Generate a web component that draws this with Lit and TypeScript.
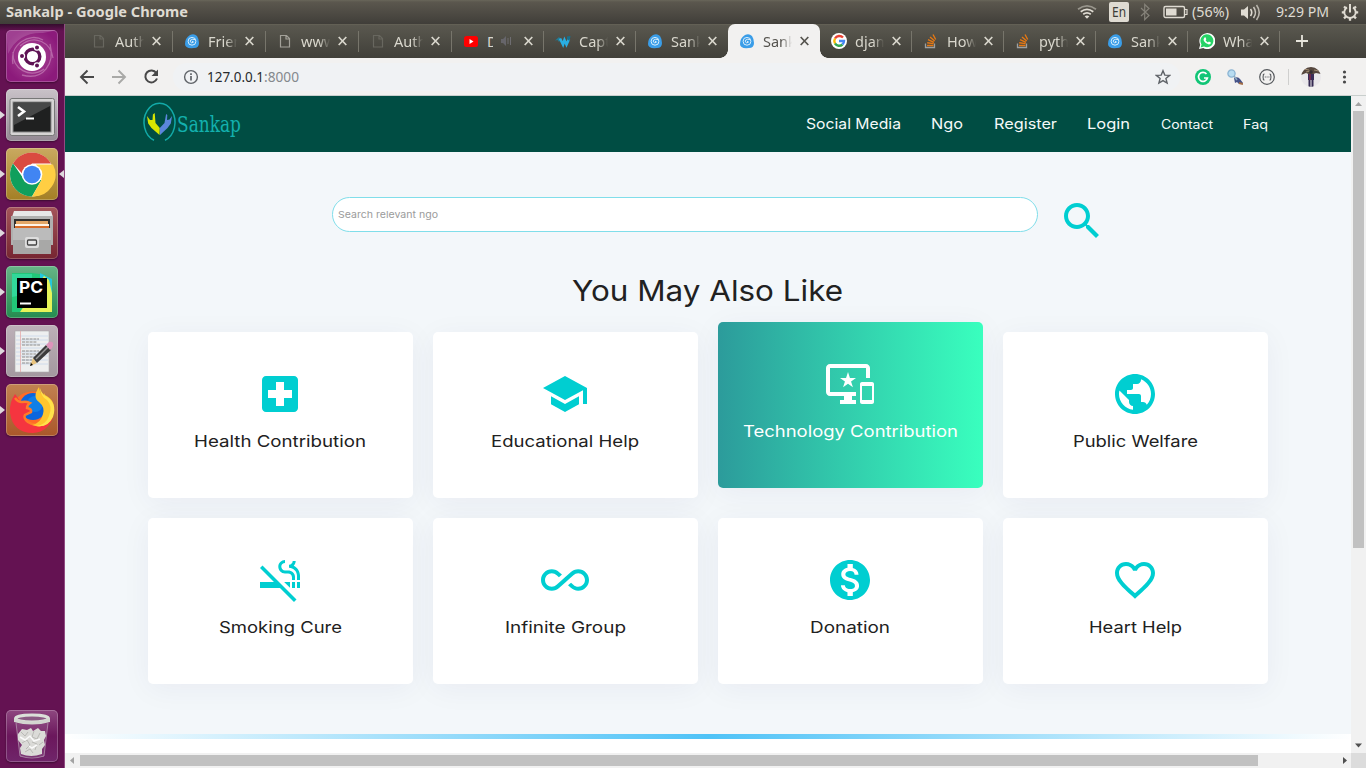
import { LitElement, html, svg, css, nothing } from "lit";
import { customElement, property } from "lit/decorators.js";
import { classMap } from "lit/directives/class-map.js";

/** One line of real text drawn to an exact advance width. */
const line = (text: string, width: number, height: number, base: number, cls: string) => html`
  <svg class="line ${cls}" width=${width} height=${height}>
    <text x="0" y=${base} textLength=${width} lengthAdjust="spacingAndGlyphs">${text}</text>
  </svg>`;

const material: Record<string, string> = {
  search: "M15.5 14h-.79l-.28-.27C15.41 12.59 16 11.11 16 9.5 16 5.91 13.09 3 9.5 3S3 5.91 3 9.5 5.91 16 9.5 16c1.61 0 3.09-.59 4.23-1.57l.27.28v.79l5 4.99L20.49 19l-4.99-5zm-6 0C7.01 14 5 11.99 5 9.5S7.01 5 9.5 5 14 7.01 14 9.5 11.99 14 9.5 14z",
  hospital: "M19 3H5c-1.1 0-1.99.9-1.99 2L3 19c0 1.1.9 2 2 2h14c1.1 0 2-.9 2-2V5c0-1.1-.9-2-2-2zm-1 11h-4v4h-4v-4H6v-4h4V6h4v4h4v4z",
  school: "M5 13.18v4L12 21l7-3.82v-4L12 17l-7-3.82zM12 3L1 9l11 6 9-4.91V17h2V9L12 3z",
  devices: "M23 11.01L18 11c-.55 0-1 .45-1 1v9c0 .55.45 1 1 1h5c.55 0 1-.45 1-1v-9c0-.55-.45-.99-1-.99zM23 20h-5v-7h5v7zM20 2H2C.89 2 0 2.89 0 4v12c0 1.1.89 2 2 2h7v2H7v2h8v-2h-2v-2h2v-2H2V4h18v5h2V4c0-1.11-.9-2-2-2zm-8.03 7L11 6l-.97 3H7l2.47 1.76-.94 2.91 2.47-1.8 2.47 1.8-.94-2.91L15 9h-3.03z",
  globe: "M12 2C6.48 2 2 6.48 2 12s4.48 10 10 10 10-4.48 10-10S17.52 2 12 2zm-1 17.93c-3.95-.49-7-3.85-7-7.93 0-.62.08-1.21.21-1.79L9 15v1c0 1.1.9 2 2 2v1.93zm6.9-2.54c-.26-.81-1-1.39-1.9-1.39h-1v-3c0-.55-.45-1-1-1H8v-2h2c.55 0 1-.45 1-1V7h2c1.1 0 2-.9 2-2v-.41c2.93 1.19 5 4.06 5 7.41 0 2.08-.8 3.97-2.1 5.39z",
  smoke: "M2 6l6.99 7H2v3h9.99l7 7 1.26-1.25-17-17zm18.5 7H22v3h-1.5zM18 13h1.5v3H18zm.85-8.12c.62-.61 1-1.45 1-2.38h-1.5c0 1.02-.83 1.85-1.85 1.85v1.5c2.24 0 4 1.83 4 4.07V12H22V9.92c0-2.23-1.28-4.15-3.15-5.04zM14.5 8.7h1.53c1.05 0 1.97.74 1.97 2.05V12h1.5v-1.59c0-1.8-1.6-3.16-3.47-3.16H14.5c-1.02 0-1.85-.98-1.85-2s.83-1.75 1.85-1.75V2c-1.85 0-3.35 1.5-3.35 3.35s1.5 3.35 3.35 3.35zm2.5 7.23V13h-2.93z",
  infinite: "M18.6 6.62c-1.44 0-2.8.56-3.77 1.53L12 10.66 10.48 12h.01L7.8 14.39c-.64.64-1.49.99-2.4.99-1.87 0-3.39-1.51-3.39-3.38S3.53 8.62 5.4 8.62c.91 0 1.76.35 2.44 1.03l1.13 1 1.51-1.34L9.22 8.2C8.2 7.18 6.84 6.62 5.4 6.62 2.42 6.62 0 9.04 0 12s2.42 5.38 5.4 5.38c1.44 0 2.8-.56 3.77-1.53l2.83-2.5.01.01L13.52 12h-.01l2.69-2.39c.64-.64 1.49-.99 2.4-.99 1.87 0 3.39 1.51 3.39 3.38s-1.52 3.38-3.39 3.38c-.9 0-1.76-.35-2.44-1.03l-1.14-1.01-1.51 1.34 1.27 1.12c1.02 1.01 2.37 1.57 3.82 1.57 2.98 0 5.4-2.41 5.4-5.38s-2.42-5.37-5.4-5.37z",
  dollar: "M12 2C6.48 2 2 6.48 2 12s4.48 10 10 10 10-4.48 10-10S17.52 2 12 2zm1.41 16.09V20h-2.67v-1.93c-1.71-.36-3.16-1.46-3.27-3.4h1.96c.1 1.05.82 1.87 2.65 1.87 1.96 0 2.4-.98 2.4-1.59 0-.83-.44-1.61-2.67-2.14-2.48-.6-4.18-1.62-4.18-3.67 0-1.72 1.39-2.84 3.11-3.21V4h2.67v1.95c1.86.45 2.79 1.86 2.85 3.39H14.3c-.05-1.11-.64-1.87-2.22-1.87-1.5 0-2.4.68-2.4 1.64 0 .84.65 1.39 2.67 1.91s4.18 1.39 4.18 3.91c-.01 1.83-1.38 2.83-3.12 3.16z",
  heart: "M16.5 3c-1.74 0-3.41.81-4.5 2.09C10.91 3.81 9.24 3 7.5 3 4.42 3 2 5.42 2 8.5c0 3.78 3.4 6.86 8.55 11.54L12 21.35l1.45-1.32C18.6 15.36 22 12.28 22 8.5 22 5.42 19.58 3 16.5 3zm-4.4 15.55l-.1.1-.1-.1C7.14 14.24 4 11.39 4 8.5 4 6.5 5.5 5 7.5 5c1.54 0 3.04.99 3.57 2.36h1.87C13.46 5.99 14.96 5 16.5 5c2 0 3.5 1.5 3.5 3.5 0 2.89-3.14 5.74-7.9 10.05z",
};
const mi = (name: string) => html`<svg class="mi" viewBox="0 0 24 24"><path d=${material[name]} /></svg>`;

/* ---------- top panel ---------- */
@customElement("top-panel")
class TopPanel extends LitElement {
  static styles = css`
    :host { display: flex; align-items: center; height: 24px; box-sizing: border-box; padding-left: 6px;
      background: linear-gradient(#69665a 0, #5b574e 2px, #403e39 100%); color: #dfdbd2;
      font-family: "Noto Sans", "Open Sans", sans-serif; }
    svg { display: block; flex: none; }
    .line { overflow: visible; fill: #dfdbd2; font-size: 14px; }
    .bold { font-weight: 700; font-size: 14px; }
    .grow { flex: 1; }
    .lang { width: 20px; height: 20px; border-radius: 2px; background: #dfdbd2; margin: 0 10px 0 12px; }
    .dark { fill: #3c3b37; font-size: 13.500px; margin: 0 0 0 3px; }
    .status { display: flex; align-items: center; }
    .batt { margin: 0 4px 0 12px; }
    .vol { margin: 0 15px 0 11px; }
    .gear { margin: 0 7px 0 12px; }
  `;
  render() {
    return html`
      ${line("Sankalp - Google Chrome", 182, 24, 17, "bold")}
      <div class="grow"></div>
      <div class="status">
        <svg width="20" height="24" fill="none" stroke="#dfdbd2" stroke-width="1.7">
          <path d="M1 9.2Q10 2.5 19 9.2" stroke="#98958c" /><path d="M3.7 11.7Q10 7 16.3 11.7" /><path d="M6.2 14.3Q10 11.4 13.8 14.3" />
          <path d="M7.6 16.2L10 18.8l2.4-2.6q-2.4-1.6-4.8 0z" fill="#dfdbd2" stroke="none" />
        </svg>
        <div class="lang">${line("En", 14, 20, 15, "dark")}</div>
        <svg width="12" height="24" fill="none" stroke="#858279" stroke-width="1.2"><path d="M2 8l8 7.500-4.300 4V4.500L10 8.500 2 16" /></svg>
        <svg class="batt" width="25" height="24">
          <rect x="1" y="6.500" width="20.500" height="11" rx="1.500" fill="none" stroke="#dfdbd2" stroke-width="1.400" />
          <rect x="3" y="8.500" width="10.500" height="7" fill="#dfdbd2" /><path d="M22 9.500h2v5h-2" fill="none" stroke="#dfdbd2" stroke-width="1.200" />
        </svg>
        ${line("(56%)", 37, 24, 17, "")}
        <svg class="vol" width="21" height="24" fill="none" stroke="#dfdbd2" stroke-width="1.600">
          <path d="M1 9.500h3L8 6v13l-4-3.500H1z" fill="#dfdbd2" stroke="none" />
          <path d="M10.500 9q2.500 3.500 0 7" /><path d="M13.500 7q4 5.500 0 11" stroke="#cac6bd" /><path d="M16.500 5q5.500 7.500 0 15" stroke="#b8b4ab" />
        </svg>
        ${line("9:29 PM", 53, 24, 17, "")}
        <svg class="gear" width="18" height="24" fill="none" stroke="#dfdbd2">
          <path d="M6 7.400A5.700 5.700 0 1 0 12 7.400" stroke-width="1.900" /><path d="M9 4v8.500" stroke-width="2" />
          <path d="M.800 12.300h3M14.200 12.300h3M3 18.400l2.200-2.200M12.800 16.200l2.200 2.200M9 17.500v3.300M3 6.500l2.200 2M15 6.500l-2.200 2" stroke-width="2.300" />
        </svg>
      </div>`;
  }
}

/* ---------- launcher ---------- */
const trees = {
  ubuntu: svg`<path d="M7 34C3 14 24 2 37 10M16 45C38 51 49 33 44 14M14 16C29 3 45 13 47 28M38 39C24 49 6 39 7 22" fill="none" stroke="#d7a1cb" stroke-width="1.300" opacity=".5" />
    <path d="M2 24Q12 2 37 3L52 0H0z" fill="#fff" opacity=".17" />
    <circle cx="26" cy="27" r="14" fill="#fff" /><circle cx="26.500" cy="26.500" r="7.300" fill="none" stroke="#5f1355" stroke-width="3.400" />
    <g stroke="#fff" stroke-width="1.200" fill="#5f1355"><circle cx="16" cy="26" r="2.600" /><circle cx="31" cy="17.500" r="2.600" /><circle cx="31" cy="35.500" r="2.600" /></g>`,
  terminal: svg`<rect x="4" y="9.500" width="44.500" height="37" rx="2" fill="#d6d4d4" stroke="#777" /><rect x="7" y="13" width="38" height="30" fill="#1f2020" stroke="#888" />
    <path d="M8 14h36v3L8 36z" fill="#fff" opacity=".18" /><path d="M12 18l6 4.500-6 4.500" fill="none" stroke="#fff" stroke-width="2.600" /><path d="M20 29.500h8" stroke="#fff" stroke-width="2" />`,
  chrome: svg`<circle cx="26" cy="26.500" r="22" fill="#fff" />
    <path d="M7 15.500A22 22 0 0 1 45 15.500H26l-9 11z" fill="#da4b40" />
    <path d="M7 15.500A22 22 0 0 0 26 48.500L35.500 32 17 30z" fill="#109f5c" /><path d="M47 16.500A22 22 0 0 1 26 48.500L35.500 32 30 16.500z" fill="#ffce43" />
    <circle cx="26" cy="26.500" r="10.300" fill="#fff" /><circle cx="26" cy="26.500" r="8.700" fill="#4185f3" />`,
  files: svg`<path d="M8 4h37l2 6H6z" fill="#e7e7e7" /><path d="M5 9h42v29H5z" fill="#b0b0af" /><rect x="8" y="12" width="36" height="12" fill="#312f2e" />
    <path d="M10 14h32v10H10z" fill="#e4a767" /><path d="M9 17h34v2H9z" fill="#fff4e7" /><path d="M9 19h34v3H9z" fill="#d66b28" />
    <path d="M7 21h38v26H7z" fill="#a8a8a7" /><path d="M7 21h38v12H7z" fill="#bbb" /><rect x="19" y="30" width="14" height="11" rx="2" fill="#ddd" /><rect x="21.500" y="33" width="9" height="5" rx="1" fill="#e8e8e8" stroke="#444" stroke-width="1.300" />`,
  pycharm: svg`<path d="M6 7h20l14 2v37H6z" fill="#21c878" /><path d="M34 7l12 6v18L34 24z" fill="#25c7dc" /><path d="M14 46l24-36 5 4 3 13v19z" fill="#e6f458" /><path d="M6 8h20v19L6 31z" fill="#31d89a" />
    <rect x="11" y="12" width="30" height="30" /><text x="13" y="27" textLength="24" lengthAdjust="spacingAndGlyphs" class="pc">PC</text><path d="M14 37.500h11" stroke="#fff" stroke-width="2" />`,
  editor: svg`<rect x="9" y="6" width="34" height="41" fill="#eeefef" stroke="#aaa" stroke-width=".6" />
    <path d="M10 11h32M10 15h32M10 19h32M10 23h32M10 27h32M10 31h32M10 35h32M10 39h32" stroke="#c7d7eb" stroke-width=".8" /><path d="M14.500 6v41" stroke="#e5a9a9" stroke-width=".8" />
    <path d="M16 14h17M16 17h15M16 20h18M16 26h17M16 29h14M16 32h13M16 35h10M16 38h11" stroke="#8c8c8c" stroke-width="1" stroke-dasharray="3 .8" />
    <path d="M24 41l3-8 4 5z" fill="#e9c37b" /><path d="M27 33l13-13 5 5-14 13z" fill="#3c3c3c" /><path d="M30 34l12-12" stroke="#999" stroke-width="1.400" /><path d="M40 20l3-3q3-1 4 1t-1 5l-2 2z" fill="#dd94bb" /><path d="M24 41l1-3 2 2z" />`,
  firefox: svg`<circle cx="26" cy="27.500" r="20" fill="#ff6b26" /><circle cx="27" cy="22.500" r="13.500" fill="#0a66dd" /><circle cx="29" cy="20" r="8" fill="#1290ef" opacity=".6" />
    <path d="M9 10q-6 9-5 19 3 20 23 20 15-1 20-16l-9 5Q29 44 22 38q-5-4-3-7l6-3q1-3-4-4 0-3 3-5-4-2-8-1-4-3-7-8z" fill="#f5353f" />
    <path d="M9 14q3 4 7 4 4-1 8 1-3 2-3 5 5 1 4 4l-6 3q-2 3 3 7 7 5 16 0" fill="none" stroke="#ff7b28" stroke-width="2.500" />
    <path d="M33 3q-7 10 0 15 6 5 4 12-2 9-11 11 14 5 20-8 6-16-7-22l-1-2q-1 2 0 4-4-3-5-10z" fill="#ffc52e" /><path d="M34 4q0 8 7 12 6 6 2 16-3 9-13 10 12 2 17-9 5-15-9-22-3-3-4-7z" fill="#ffe34a" />`,
  trash: svg`<path d="M10 12h32l-4 35H14z" fill="#fff" opacity=".1" /><path d="M10 13l4 33q12 4 24 0l4-33" fill="none" stroke="#d6d1d5" opacity=".5" />
    <path d="M12 24l4-5 5 1 4-2 2 3 5-3 3 3 4 0 1 5-2 4 1 5-3 4 0 5q-11 4-21 0l-1-6 2-3-4-5z" fill="#dbdbd8" />
    <path d="M15 22l4 4 3-4M28 21l-2 6 5 2 3-6M16 33l5-3 3 5-4 4M26 32l5 2-2 6M33 35l4-3M19 42l5-3 3 4" fill="none" stroke="#b9b9b5" stroke-width="1" />
    <path d="M14 27l5 3 5-4 4 5 6-2M23 36l3 2 5-3" fill="none" stroke="#fafafa" stroke-width="1.500" />
    <ellipse cx="26" cy="8.500" rx="16.500" ry="3.600" fill="#8b5a83" stroke="#dbe0d9" stroke-width="3" /><path d="M8 8v4q18 5 36 0V8q-18 7-36 0z" fill="#d3d6d0" />`,
};

@customElement("side-launcher")
class SideLauncher extends LitElement {
  static styles = css`
    :host { display: flex; flex-direction: column; width: 65px; box-sizing: border-box; padding: 6px 0;
      background: linear-gradient(#350c2e 0, rgba(53,12,46,0) 7px), #641252; border-right: 1px solid #914b82; }
    .row { display: flex; align-items: center; height: 52px; margin-bottom: 7px; }
    .tile { box-sizing: border-box; width: 52px; height: 52px; flex: none; border-radius: 5px; overflow: hidden;
      box-shadow: inset 0 0 0 1px rgba(255,255,255,.23), 0 1px 2px rgba(0,0,0,.4); }
    .side { width: 6px; height: 10px; flex: none; }
    svg { display: block; }
    .last { margin: auto 0 0; }
    .ubuntu { background: radial-gradient(circle, #ad4c99, #8c1a7b 75%); }
    .terminal { background: linear-gradient(#c9c2c8, #948a94); }
    .chrome { background: linear-gradient(#c9a960, #a47f25); }
    .files { background: linear-gradient(#a4555a, #762531); }
    .pycharm { background: linear-gradient(#67b487, #258c50); }
    .editor { background: linear-gradient(#bdb0b8, #a3989f); }
    .firefox { background: linear-gradient(#c18151, #aa582a); }
    .trash { background: linear-gradient(#8e4780, #6b175c 50%, #70256a); }
    .pc { font: 700 16px Inter, sans-serif; fill: #fff; }
  `;
  render() {
    const names = Object.keys(trees) as (keyof typeof trees)[];
    return html`${names.map((n) => html`
      <div class=${classMap({ row: true, last: n === "trash" })}>
        <svg class="side">${n === "ubuntu" || n === "trash" ? nothing : svg`<path d="M0 1l5 4-5 4z" fill="#ded9dd" />`}</svg>
        <div class="tile ${n}"><svg width="52" height="52">${trees[n]}</svg></div>
        ${n === "chrome" ? html`<svg class="side"><path d="M6 1L1 5l5 4z" fill="#ded9dd" /></svg>` : nothing}
      </div>`)}`;
  }
}

/* ---------- browser chrome ---------- */
const favicons: Record<string, unknown> = {
  dim: svg`<path d="M3.500 2.500h6l3 3v8.500h-9zM9 2.500V6h3.500" fill="none" stroke="#68675f" stroke-width="1.200" />`,
  page: svg`<path d="M3.500 2.500h6l3 3v8.500h-9zM9 2.500V6h3.500" fill="none" stroke="#a3a199" stroke-width="1.200" />`,
  drop: svg`<path d="M6 2Q10 0 13 3q2 3 2 7 0 5-5 5-9 1-9-4Q1 5 6 2z" fill="#3a9de8" /><circle cx="8" cy="8.300" r="3.900" fill="none" stroke="#d7edfc" stroke-width="1" /><path d="M11 6.500L8.500 6.300Q6 6.500 6.300 8.800q1.200 2 3.200.2l-1.500-.8" fill="none" stroke="#e6f4fd" stroke-width=".9" />`,
  youtube: svg`<rect x="1" y="3" width="14" height="11" rx="2.500" fill="#f00" /><path d="M6.500 6v5l4-2.500z" fill="#fff" />`,
  wave: svg`<path d="M0 7.500l4-3.500 2 2.500-2 2.500-1.500-2z" fill="#237a92" /><path d="M5 5.500l3 6 1.500-4.500 2 4.500L14 6" fill="none" stroke="#29aee3" stroke-width="2.600" /><path d="M12 3.500l3.500-.5-1 5-2.500-2z" fill="#17708d" />`,
  google: svg`<circle cx="8" cy="8" r="8" fill="#fff" /><g fill="none" stroke-width="2.400"><path d="M12 4.500A5 5 0 0 0 4 5.500" stroke="#ea4335" /><path d="M4 5.500a5 5 0 0 0 0 5" stroke="#fbbc05" /><path d="M4 10.500a5 5 0 0 0 7.500 1" stroke="#34a853" /><path d="M11.500 11.500Q13 10 13 8H8" stroke="#4285f4" /></g>`,
  stack: svg`<path d="M2.500 10.500v4h9v-4" fill="none" stroke="#9da0a1" stroke-width="1.300" /><path d="M4 12.500h6.500M4.200 9.800l6.400.8M5 6.700l6 2.600M7 4l4.700 4M10 1.500l2.700 5" stroke="#e57814" stroke-width="1.400" />`,
  whatsapp: svg`<path d="M0 16l1.200-4.300A8 8 0 1 1 4.300 15z" fill="#fff" /><path d="M1.600 14.400l.9-3A6.500 6.500 0 1 1 5 13.600z" fill="#25d366" /><path d="M5.500 4.500l1-.3.800 2-.7 1q.8 1.500 2.300 2.200l1-.9 2 1q0 2-2 2-3-.3-5-3.500-1-2 .6-3.500z" fill="#fff" />`,
};

@customElement("browser-tab")
class BrowserTab extends LitElement {
  @property() icon = "";
  @property() label = "";
  @property({ type: Boolean }) active = false;
  @property({ type: Boolean }) audio = false;
  @property({ type: Boolean }) bare = false;
  static styles = css`
    :host { display: block; height: 34px; color: #d9d7cd; }
    .tab { position: relative; display: flex; align-items: center; box-sizing: border-box; width: 100%; height: 34px; padding-left: 11px; }
    .tab::after { content: ""; position: absolute; right: 0; top: 7px; height: 21px; width: 1px; background: #77756b; }
    .bare::after { display: none; }
    .active { background: #f2f1f0; border-radius: 7px 7px 0 0; color: #55534e; }
    .flare { position: absolute; bottom: 0; width: 8px; height: 8px; }
    .fl { left: -8px; background: radial-gradient(circle at 0 0, transparent 7.500px, #f2f1f0 8px); }
    .fr { right: -8px; background: radial-gradient(circle at 100% 0, transparent 7.500px, #f2f1f0 8px); }
    svg { display: block; flex: none; }
    .title { width: 30px; margin-left: 8px; overflow: hidden; white-space: nowrap; font: 14.500px/20px "Noto Sans", sans-serif;
      -webkit-mask-image: linear-gradient(90deg, #000 60%, transparent 97%); mask-image: linear-gradient(90deg, #000 60%, transparent 97%); }
    .short { width: 6px; -webkit-mask-image: none; mask-image: none; }
    .close { margin-left: 6px; }
    .speaker { margin: 0 5px 0 7px; }
  `;
  render() {
    return html`<div class=${classMap({ tab: true, active: this.active, bare: this.bare || this.active })}>
      ${this.active ? html`<i class="flare fl"></i><i class="flare fr"></i>` : nothing}
      <svg width="16" height="16">${favicons[this.icon]}</svg>
      <span class=${classMap({ title: true, short: this.audio })}>${this.label}</span>
      ${this.audio ? html`<svg class="speaker" width="12" height="12" fill="none" stroke="#6e6d71"><path d="M1 4h2l3-3v10L3 8H1z" fill="#66656a" stroke="none" /><path d="M8 3v6M10.500 2v8" /></svg>` : nothing}
      <svg class="close" width="11" height="12"><path d="M1.700 2l7.600 8M9.300 2l-7.600 8" stroke="currentColor" stroke-width="1.700" /></svg>
    </div>`;
  }
}

const tabs: [string, string][] = [["dim", "Auth"], ["drop", "Frien"], ["page", "www"], ["dim", "Auth"], ["youtube", "D"], ["wave", "Capt"],
  ["drop", "Sank"], ["drop", "Sank"], ["google", "djan"], ["stack", "How"], ["stack", "pyth"], ["drop", "Sank"], ["whatsapp", "Wha"]];

@customElement("browser-bar")
class BrowserBar extends LitElement {
  static styles = css`
    :host { display: block; }
    .strip { display: grid; grid-template-columns: repeat(4, 93px) repeat(9, 92px) 60px; height: 34px; padding-left: 15px; background: linear-gradient(#6b685b 0, #5a584f 1px, #403f39 100%); }
    .plus { margin-left: 16px; }
    .bar { display: flex; align-items: center; height: 37px; padding-left: 12px; background: #f2f1f0; border-bottom: 1px solid #c9cfcd; }
    .nav { margin-right: 12px; flex: none; }
    svg { display: block; flex: none; }
    .omni { display: flex; flex: none; align-items: center; box-sizing: border-box; width: 1007px; height: 28px; padding: 0 9px 0 10px; border-radius: 14px; background: #f0f2f4; }
    .line { overflow: visible; font: 13.500px "Noto Sans", sans-serif; fill: #282a2d; }
    .port { fill: #85898d; }
    .info { margin-right: 8px; }
    .star { margin-left: auto; }
    .ext { display: flex; flex: none; align-items: center; gap: 16px; padding-left: 15px; }
    .sep { width: 1px; height: 16px; background: #cfcfce; margin: 0 -4px 0 -3px; }
  `;
  render() {
    return html`
      <div class="strip">
        ${tabs.map(([icon, label], i) => html`<browser-tab .icon=${icon} .label=${label} .active=${i === 7} .bare=${i === 6} .audio=${i === 4}></browser-tab>`)}
        <svg class="plus" width="12" height="34"><path d="M6 11v12M0 17h12" stroke="#e7e5dc" stroke-width="1.800" /></svg>
      </div>
      <div class="bar">
        <svg class="nav" width="20" height="20" fill="none" stroke="#484848" stroke-width="1.900"><path d="M17 10H4M10.500 3.500L4 10l6.500 6.500" /></svg>
        <svg class="nav" width="20" height="20" fill="none" stroke="#a9a9a7" stroke-width="1.900"><path d="M3 10h13M9.500 3.500L16 10l-6.500 6.500" /></svg>
        <svg class="nav" width="20" height="20"><path d="M15.300 6A6 6 0 1 0 16 11.500" fill="none" stroke="#484848" stroke-width="2" /><path d="M17 2.500V9h-6.500z" fill="#484848" /></svg>
        <div class="omni">
          <svg class="info" width="16" height="16"><circle cx="8" cy="8" r="6.400" fill="none" stroke="#5f6368" stroke-width="1.400" /><path d="M8 7v4.500M8 4.200v1.700" stroke="#5f6368" stroke-width="1.700" /></svg>
          ${line("127.0.0.1", 57, 20, 14.5, "")}${line(":8000", 35, 20, 14.5, "port")}
          <svg class="star" width="16" height="16"><path d="M8 1.700l1.800 4.400 4.800.3-3.700 3 1.200 4.700L8 11.600l-4.100 2.500 1.200-4.700-3.700-3 4.800-.3z" fill="none" stroke="#5f6368" stroke-width="1.400" /></svg>
        </div>
        <div class="ext">
          <svg width="16" height="16"><circle cx="8" cy="8" r="8" fill="#11c576" /><path d="M11.500 5A4.500 4.500 0 1 0 12.400 9H9" fill="none" stroke="#fff" stroke-width="1.700" /></svg>
          <svg width="16" height="16"><path d="M7 9q4-2 6 1l3 4-4 1-2-2-2 1z" fill="#445187" /><path d="M12 14l4 1" stroke="#a06b45" stroke-width="2" /><circle cx="4.500" cy="4.500" r="3.600" fill="#b8dcf1" stroke="#8bb4d3" stroke-width="1.300" /><path d="M7 7l3 4" stroke="#8caac2" stroke-width="1.600" /></svg>
          <svg width="16" height="16" fill="none" stroke="#55585c"><circle cx="8" cy="8" r="7.300" stroke-width="1.200" /><path d="M5.500 5q-1.500 0-1.200 1.700Q4.300 8 3.500 8q.8 0 .8 1.300Q4 11 5.500 11M10.500 5q1.500 0 1.200 1.700 0 1.300.8 1.300-.8 0-.8 1.300.3 1.700-1.200 1.700" stroke-width="1.100" /><path d="M5.800 8h4.600" stroke-width="1.200" stroke-dasharray="1 .8" /></svg>
          <i class="sep"></i>
          <svg width="20" height="20"><defs><clipPath id="av"><circle cx="10" cy="10" r="10" /></clipPath></defs><g clip-path="url(#av)"><path d="M0 0h20v20H0z" fill="#e9e7ea" /><path d="M0 0h20v7l-5-1-5 2-5-2-5 2z" fill="#55463d" /><path d="M3 2l5 1M13 3l5 1M5 5l4-1" stroke="#a08b72" /><circle cx="10" cy="5" r="1.800" fill="#332c30" /><path d="M7 7h6v6H7z" fill="#392c57" /><path d="M9 7v6" stroke="#a5283c" /><path d="M8.500 13v7M11.500 13v7" stroke="#342951" stroke-width="2" /></g></svg>
          <svg width="20" height="16" fill="#484848"><circle cx="7.500" cy="3" r="1.600" /><circle cx="7.500" cy="8" r="1.600" /><circle cx="7.500" cy="13" r="1.600" /></svg>
        </div>
      </div>`;
  }
}

/* ---------- site ---------- */
const links: [string, number, string][] = [["Social Media", 95, "big"], ["Ngo", 32, "big"], ["Register", 63, "big"], ["Login", 43, "big"], ["Contact", 52, "small"], ["Faq", 25, "small"]];
const cards: [string, string, number][] = [["hospital", "Health Contribution", 172], ["school", "Educational Help", 148], ["devices", "Technology Contribution", 215], ["globe", "Public Welfare", 125],
  ["smoke", "Smoking Cure", 123], ["infinite", "Infinite Group", 121], ["dollar", "Donation", 80], ["heart", "Heart Help", 93]];

@customElement("sankalp-page")
class SankalpPage extends LitElement {
  static styles = css`
    :host { display: flex; flex-direction: column; overflow: hidden; background: #f3f7fa; font-family: Inter, "Open Sans", sans-serif; }
    svg { display: block; flex: none; }
    .line { overflow: visible; }
    header { display: flex; align-items: center; flex: none; height: 56px; box-sizing: border-box; padding: 0 83px 0 77px; background: #004d43; }
    nav { display: flex; gap: 30.500px; margin-left: auto; }
    .big { font-size: 14.500px; fill: #f4f9f8; }
    .small { font-size: 12.500px; fill: #f4f9f8; }
    .logo { overflow: visible; }
    .brand { margin-left: 1px; font: 23px "DejaVu Serif", serif; fill: #13b0ad; }
    .search { display: flex; margin: 45px 0 0 267px; height: 48px; flex: none; }
    .field { display: flex; align-items: center; box-sizing: border-box; width: 706px; height: 35px; padding-left: 5px; background: #fff; border: 1px solid #80deea; border-radius: 17.500px; }
    .hint { font-size: 9.600px; fill: #9b9b9b; }
    .mi { width: 48px; height: 48px; fill: #00ced1; }
    .search .mi { margin-left: 20px; }
    h1 { display: flex; justify-content: center; margin: 25px 0 22px; padding-right: 1px; font-weight: 400; flex: none; }
    .heading { font-size: 29px; font-weight: 400; fill: #212121; }
    .grid { display: grid; grid-template-columns: repeat(4, 265px); grid-auto-rows: 166px; gap: 20px; padding-left: 83px; flex: none; }
    .card { display: flex; flex-direction: column; align-items: center; box-sizing: border-box; padding: 38px 1px 0 0; background: #fff; border-radius: 5px; box-shadow: 0 5px 30px rgba(47,28,106,.052); }
    .name { font-size: 16.300px; font-weight: 400; fill: #212121; margin-top: 11px; }
    .hot { background: linear-gradient(90deg, #2c9b9b, #32cbac 47%, #39ffbe); transform: translateY(-10px); }
    .hot .mi, .hot .name { fill: #fff; }
    .rule { flex: none; height: 5px; margin-top: 50px; background: linear-gradient(90deg, #fff, #4fc3f7, #fff); }
    .rest { flex: 1; background: #fff; }
  `;
  render() {
    return html`
      <header>
        <svg class="logo" width="34" height="56">
          <path d="M12 44.300A15.500 19.200 0 1 1 23 44.300" fill="none" stroke="#12aaa8" stroke-width="1.500" />
          <path d="M5 20l1.200 7.500L9.500 32l8 7 .3-7-4.300-5-.8-10-1.800 1.500-.400 5.500-2.500 0z" fill="#d8e600" />
          <path d="M30 20l-1.200 7.500L25.500 32l-7.500 7-.2-7 4.700-5 1.600-9 1.200 1-.300 5 2.500-.500z" fill="#5b86dc" />
        </svg>
        ${line("Sankap", 64, 56, 36, "brand")}
        <nav>${links.map(([t, w, c]) => line(t, w, 20, 15, c))}</nav>
      </header>
      <div class="search"><div class="field">${line("Search relevant ngo", 100, 14, 10.2, "hint")}</div>${mi("search")}</div>
      <h1>${line("You May Also Like", 271, 40, 31, "heading")}</h1>
      <div class="grid">${cards.map(([i, t, w], n) => html`<div class=${classMap({ card: true, hot: n === 2 })}>${mi(i)}${line(t, w, 24, 18, "name")}</div>`)}</div>
      <div class="rule"></div><div class="rest"></div>`;
  }
}

/* ---------- window frame ---------- */
@customElement("app-root")
class AppRoot extends LitElement {
  static styles = css`
    :host { display: grid; grid-template: 24px 744px / 65px 1301px; width: 1366px; height: 768px; overflow: hidden; }
    top-panel { grid-column: 1 / 3; }
    .window { display: grid; grid-template: 72px 657px 15px / 1286px 15px; min-width: 0; }
    browser-bar { grid-column: 1 / 3; }
    .v, .h { display: flex; background: #f1f1f1; }
    .v { flex-direction: column; align-items: center; }
    .h { align-items: center; }
    .vt { width: 11px; height: 437px; background: #c1c1c1; }
    .ht { width: 1178px; height: 11px; background: #c1c1c1; }
    .corner { background: #dcdcdc; }
    svg { display: block; flex: none; }
    .end { margin-top: auto; }
    .far { margin-left: auto; }
  `;
  render() {
    return html`
      <top-panel></top-panel>
      <side-launcher></side-launcher>
      <div class="window">
        <browser-bar></browser-bar>
        <sankalp-page></sankalp-page>
        <div class="v">
          <svg width="15" height="15"><path d="M4 10l3.500-4L11 10z" fill="#a3a3a3" /></svg><div class="vt"></div>
          <svg class="end" width="15" height="15"><path d="M4 5.500l3.500 4 3.500-4z" fill="#505050" /></svg>
        </div>
        <div class="h">
          <svg width="15" height="15"><path d="M9 4L5 7.500 9 11z" fill="#a3a3a3" /></svg><div class="ht"></div>
          <svg class="far" width="15" height="15"><path d="M7 4l4 3.500L7 11z" fill="#505050" /></svg>
        </div>
        <div class="corner"></div>
      </div>`;
  }
}
